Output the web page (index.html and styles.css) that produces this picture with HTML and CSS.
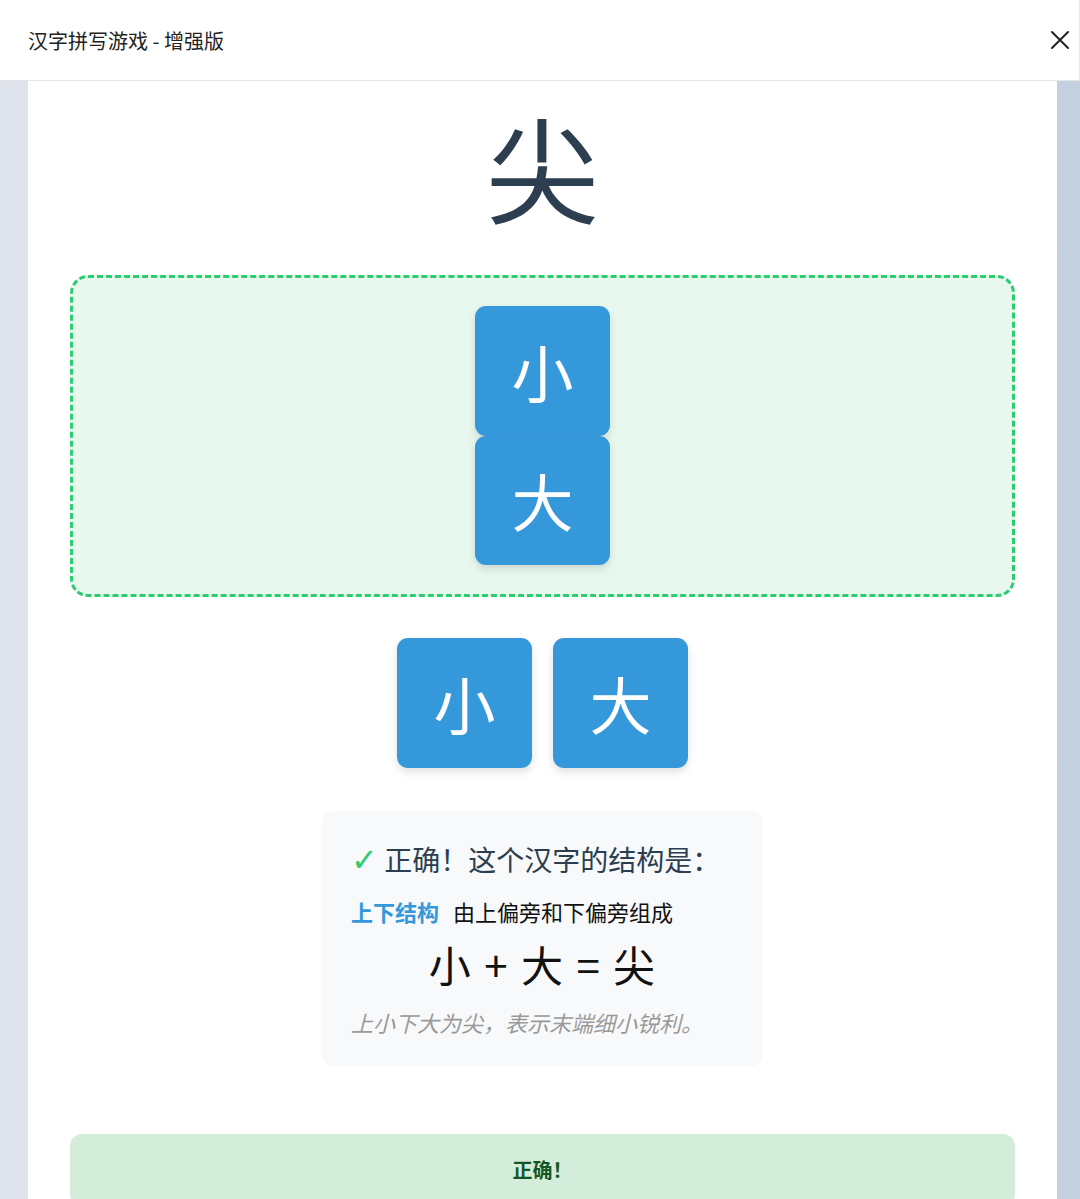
FILE: index.html
```html
<!DOCTYPE html>
<html lang="zh">
<head>
<meta charset="utf-8">
<title>汉字拼写游戏 - 增强版</title>
<link rel="stylesheet" href="styles.css">
</head>
<body>
<header class="topbar">
  <span class="title">汉字拼写游戏 - 增强版</span>
  <span class="close" aria-label="关闭">
    <svg width="20" height="20" viewBox="0 0 20 20"><path d="M2 2 L18 18 M18 2 L2 18" stroke="#222" stroke-width="2" fill="none" stroke-linecap="round"/></svg>
  </span>
</header>
<main class="page">
  <section class="card">
    <div class="target">尖</div>
    <div class="dropzone">
      <div class="tile stacked">小</div>
      <div class="tile stacked">大</div>
    </div>
    <div class="pool">
      <div class="tile">小</div>
      <div class="tile">大</div>
    </div>
    <div class="info">
      <div class="info-head"><span class="check">✓</span> 正确！这个汉字的结构是：</div>
      <div class="info-type"><span class="type">上下结构</span>由上偏旁和下偏旁组成</div>
      <div class="formula">小 + 大 = 尖</div>
      <div class="note">上小下大为尖，表示末端细小锐利。</div>
    </div>
    <div class="result">正确！</div>
  </section>
</main>
</body>
</html>
```
FILE: styles.css
```css
* { box-sizing: border-box; }
html, body { margin: 0; padding: 0; }
body {
  font-family: "Noto Sans CJK SC", "Noto Sans", sans-serif;
  background: linear-gradient(to right, #dfe3eb 0%, #d3dae6 60%, #c4cfe0 100%);
  height: 1199px;
  overflow: hidden;
}
.topbar {
  height: 81px;
  background: #fff;
  border-bottom: 1px solid #e6e6e6;
  border-right: 1px solid #e8e8e8;
  display: flex;
  align-items: center;
  justify-content: space-between;
  padding: 0 9px 0 28px;
}
.title {
  font-size: 20px;
  color: #222;
}
.close { display: flex; align-items: center; }
.page {
  padding: 0 23px 0 28px;
}
.card {
  background: #fff;
  padding: 10px 42px 40px;
  display: flex;
  flex-direction: column;
  align-items: stretch;
  min-height: 1200px;
}
.target {
  text-align: center;
  font-size: 114px;
  line-height: 150px;
  color: #2c3e50;
}
.dropzone {
  margin-top: 34px;
  border: 3px dashed #2ecc71;
  border-radius: 18px;
  background: #e8f8ee;
  padding: 28px 0 29px;
  display: flex;
  flex-direction: column;
  align-items: center;
}
.tile {
  width: 135px;
  height: 130px;
  background: #3498db;
  color: #fff;
  border-radius: 11px;
  font-size: 62px;
  display: flex;
  align-items: center;
  justify-content: center;
  box-shadow: 0 4px 8px rgba(0, 0, 0, 0.12);
}
.tile.stacked { height: 129.5px; }
.pool {
  margin-top: 41px;
  display: flex;
  justify-content: center;
  gap: 21px;
}
.info {
  align-self: center;
  width: 441px;
  margin-top: 43px;
  background: #f8f9fa;
  border-radius: 12px;
  padding: 30px 10px 30px 29px;
}
.info-head {
  font-size: 28px;
  line-height: 36px;
  color: #2c3e50;
  white-space: nowrap;
}
.check {
  color: #2ecc71;
  font-family: "DejaVu Sans", sans-serif;
  font-size: 32px;
  font-weight: 300;
}
.info-type {
  margin-top: 19px;
  font-size: 22px;
  line-height: 28px;
  color: #111;
  white-space: nowrap;
}
.type {
  color: #3498db;
  font-weight: 700;
  margin-right: 14px;
}
.formula {
  margin-top: 14px;
  text-align: center;
  font-size: 42px;
  line-height: 50px;
  color: #111;
  word-spacing: 4px;
  padding-right: 20px;
}
.note {
  margin-top: 19px;
  font-size: 22px;
  line-height: 28px;
  color: #999;
  font-style: italic;
  white-space: nowrap;
}
.result {
  margin-top: 68px;
  background: #d4edda;
  border-radius: 12px;
  padding: 22px 0;
  text-align: center;
  font-size: 20px;
  line-height: 28px;
  font-weight: 700;
  color: #155724;
}
```
